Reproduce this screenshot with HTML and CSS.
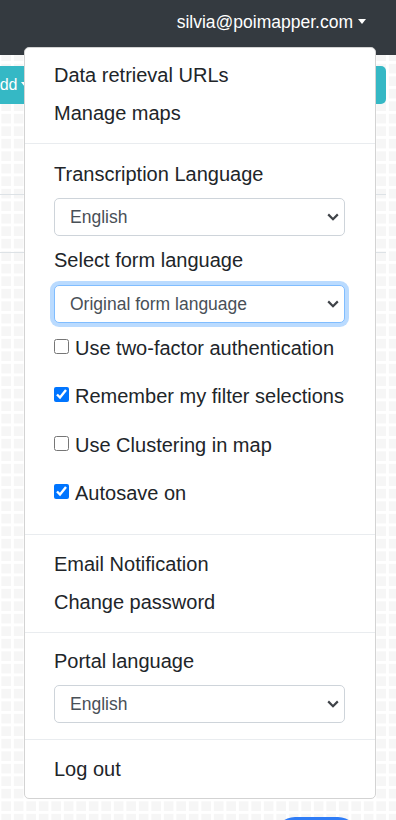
FILE: index.html
```html
<!DOCTYPE html>
<html lang="en">
<head>
<meta charset="utf-8">
<title>Account menu</title>
<link rel="stylesheet" href="styles.css">
</head>
<body>
<header class="navbar">
  <a class="nav-user">silvia@poimapper.com<span class="caret"></span></a>
</header>
<main class="page">
  <div class="toolbar">
    <button class="btn-teal btn-add">Add<span class="caret caret-sm"></span></button>
    <button class="btn-teal btn-right" aria-label="Filters"></button>
  </div>
  <div class="table-head"></div>
  <button class="btn-fab" aria-label="Save"></button>
</main>
<div class="dropdown-menu">
  <a class="dropdown-item">Data retrieval URLs</a>
  <a class="dropdown-item">Manage maps</a>
  <div class="dropdown-divider"></div>
  <div class="menu-form form-top">
    <label class="field-label">Transcription Language</label>
    <select class="form-select"><option>English</option></select>
    <label class="field-label">Select form language</label>
    <select class="form-select is-focused"><option>Original form language</option></select>
    <label class="check-row"><input type="checkbox"><span>Use two-factor authentication</span></label>
    <label class="check-row"><input type="checkbox" checked><span>Remember my filter selections</span></label>
    <label class="check-row"><input type="checkbox"><span>Use Clustering in map</span></label>
    <label class="check-row"><input type="checkbox" checked><span>Autosave on</span></label>
  </div>
  <div class="dropdown-divider"></div>
  <a class="dropdown-item">Email Notification</a>
  <a class="dropdown-item">Change password</a>
  <div class="dropdown-divider"></div>
  <div class="menu-form form-portal">
    <label class="field-label">Portal language</label>
    <select class="form-select"><option>English</option></select>
  </div>
  <div class="dropdown-divider"></div>
  <a class="dropdown-item">Log out</a>
</div>
</body>
</html>
```
FILE: styles.css
```css
* { box-sizing: border-box; }

html, body {
  margin: 0;
  padding: 0;
}

body {
  width: 396px;
  min-height: 820px;
  font-family: "Liberation Sans", Arial, sans-serif;
  color: #212529;
  background-color: #f6f6f6;
  background-image:
    linear-gradient(90deg, #ffffff 3px, transparent 3px),
    linear-gradient(#ffffff 3px, transparent 3px);
  background-size: 12.5px 12.5px;
  background-position: -1.5px -1.5px;
  position: relative;
  overflow: hidden;
}

/* ---------- navbar ---------- */
.navbar {
  height: 55px;
  background: #343a40;
  display: flex;
  justify-content: flex-end;
  align-items: flex-start;
  padding: 9px 30px 0 0;
}

.nav-user {
  font-size: 17.5px;
  line-height: 26px;
  color: #ffffff;
  text-decoration: none;
}

.caret {
  display: inline-block;
  margin-left: 5px;
  vertical-align: 4px;
  border-top: 5px solid currentColor;
  border-left: 4.5px solid transparent;
  border-right: 4.5px solid transparent;
}

/* ---------- page behind ---------- */
.page {
  width: 386px;
}

.toolbar {
  margin-top: 11px;
  height: 38px;
  display: flex;
  justify-content: space-between;
}

.btn-teal {
  height: 38px;
  border: none;
  background: #35b8c5;
  color: #ffffff;
  font-family: "Liberation Sans", Arial, sans-serif;
  font-size: 16px;
  border-radius: 5px;
}

.btn-add {
  margin-left: -23px;
  padding: 0 12px;
  text-align: left;
}

.caret-sm {
  margin-left: 4px;
  vertical-align: 3px;
  border-top-width: 5px;
}

.btn-right {
  width: 90px;
}

.table-head {
  margin-top: 90px;
  height: 59px;
  border-top: 1px solid #dde2e6;
  border-bottom: 1px solid #dde2e6;
}

.btn-fab {
  display: block;
  margin: 564px 0 0 275px;
  width: 83px;
  height: 40px;
  border: none;
  border-radius: 20px;
  background: #2f7cf6;
}

/* ---------- dropdown menu ---------- */
.dropdown-menu {
  position: absolute;
  top: 47px;
  left: 24px;
  width: 352px;
  background: #ffffff;
  border: 1px solid #d3d3d3;
  border-radius: 5px;
  padding: 8px 0 10px;
  z-index: 10;
  display: flex;
  flex-direction: column;
}

.dropdown-item {
  display: block;
  padding: 5px 30px 5px 29px;
  font-size: 20px;
  line-height: 28px;
  color: #212529;
  text-decoration: none;
  white-space: nowrap;
}

.dropdown-divider {
  height: 0;
  margin: 11px 0 10px;
  border-top: 1px solid #e9ecef;
}

.menu-form {
  display: flex;
  flex-direction: column;
  padding: 0 30px 0 29px;
}

.form-top {
  padding-top: 6px;
  padding-bottom: 16px;
}

.form-portal {
  padding-top: 4px;
  padding-bottom: 5px;
}

.field-label {
  font-size: 20px;
  line-height: 28px;
  margin-bottom: 10px;
  color: #212529;
}

.form-select {
  -webkit-appearance: none;
  appearance: none;
  width: 100%;
  height: 38px;
  margin: 0 0 10px;
  padding: 0 30px 0 15px;
  border: 1px solid #ced4da;
  border-radius: 5px;
  font-family: "Liberation Sans", Arial, sans-serif;
  font-size: 17.5px;
  color: #495057;
  background-color: #ffffff;
  background-image: url("data:image/svg+xml,%3Csvg xmlns='http://www.w3.org/2000/svg' width='12' height='8' viewBox='0 0 12 8'%3E%3Cpath d='M1.2 1.4 6 6.2l4.8-4.8' fill='none' stroke='%23404449' stroke-width='2.2'/%3E%3C/svg%3E");
  background-repeat: no-repeat;
  background-position: right 5px center;
  background-size: 12px 8px;
}

.form-portal .form-select {
  margin-bottom: 0;
}

.field-label + .form-select.is-focused {
  margin-top: 1px;
}

.is-focused {
  border-color: #80bdff;
  box-shadow: 0 0 0 4px rgba(0, 123, 255, 0.27);
  margin-bottom: 11px;
}

.check-row {
  display: flex;
  align-items: center;
  height: 28px;
  margin-bottom: 20.33px;
  font-size: 20px;
  line-height: 28px;
  color: #212529;
  white-space: nowrap;
}

.check-row:last-child {
  margin-bottom: 0;
}

.check-row input {
  width: 15px;
  height: 15px;
  margin: 0 6px 3px 0;
  flex: none;
}
```
